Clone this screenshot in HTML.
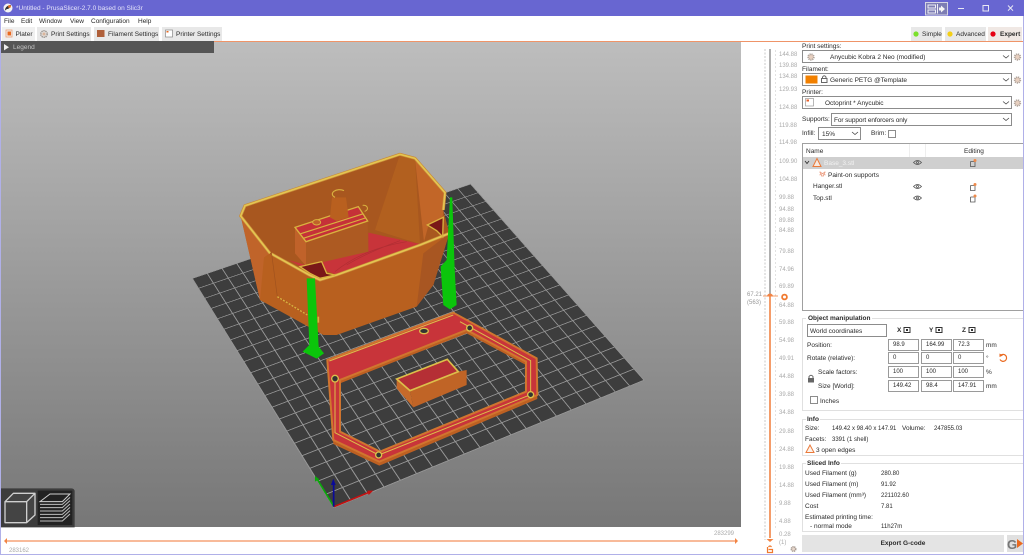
<!DOCTYPE html>
<html><head><meta charset="utf-8"><title>PrusaSlicer</title>
<style>
html,body{margin:0;padding:0;width:1024px;height:555px;overflow:hidden;background:#fff}
body{position:relative;font-family:"Liberation Sans",sans-serif;font-size:6.5px;color:#2a2a2a}
.a{position:absolute}
.t{position:absolute;white-space:nowrap;line-height:10px;height:10px;margin-top:1px}
.d{font-size:6px}
.n{position:absolute;white-space:nowrap;line-height:10px;height:10px;color:#aaa;left:779px;font-size:6px;margin-top:1px}
.box{position:absolute;background:#fff;border:1px solid #8c8c8c;box-sizing:border-box}
.inp{position:absolute;background:#fff;border:1px solid #9a9a9a;box-sizing:border-box;line-height:11px;padding-left:4px;white-space:nowrap;font-size:6px}
.tab{position:absolute;top:27px;height:14px;background:#e8e8e8}
.grp{position:absolute;left:802px;width:224px;border:1px solid #e0e0e0;box-sizing:border-box}
svg{position:absolute;overflow:visible}
</style></head><body>
<!-- title bar -->
<div class="a" style="left:0;top:0;width:1024px;height:16px;background:#6866d1"></div>
<svg style="left:0;top:0" width="20" height="16"><circle cx="8" cy="8" r="4.5" fill="#f4f4f4"/><path d="M5 10.5C5 7 8 5 11 5 10 8 9 9 7 9Z" fill="#333"/><circle cx="9.5" cy="6.5" r="1.4" fill="#ea7020"/></svg>
<div class="t" style="left:16px;top:3px;color:#e4e4fa">*Untitled - PrusaSlicer-2.7.0 based on Slic3r</div>
<svg style="left:925px;top:2px" width="99" height="14">
<rect x=".5" y=".5" width="22" height="12.5" fill="#7d7db4" stroke="#d4d4e4"/>
<rect x="3" y="3" width="7.5" height="3" fill="none" stroke="#f0f0f8" stroke-width="1"/><rect x="3" y="8" width="7.5" height="3" fill="none" stroke="#f0f0f8" stroke-width="1"/>
<path d="M12.5 2V11.5" stroke="#f0f0f8" stroke-width="1"/><path d="M14 5.5V8.5H16V10.5L20 7 16 3.5V5.5Z" fill="#f4f4f4"/>
<path d="M33 6.5H39" stroke="#e8e8f4" stroke-width="1"/>
<rect x="58" y="3.5" width="5.5" height="5.5" fill="none" stroke="#e8e8f4" stroke-width="1"/>
<path d="M83 3.5L88 8.7M88 3.5L83 8.7" stroke="#e8e8f4" stroke-width="1"/></svg>
<!-- menu -->
<div class="t" style="left:4px;top:16px">File</div>
<div class="t" style="left:21px;top:16px">Edit</div>
<div class="t" style="left:39px;top:16px">Window</div>
<div class="t" style="left:70px;top:16px">View</div>
<div class="t" style="left:91px;top:16px">Configuration</div>
<div class="t" style="left:138px;top:16px">Help</div>
<!-- tabs -->
<div class="tab" style="left:2px;width:33px;background:#f0f0f0"></div>
<div class="tab" style="left:37px;width:54px"></div>
<div class="tab" style="left:94px;width:65px"></div>
<div class="tab" style="left:162px;width:60px"></div>
<div class="tab" style="left:911px;width:31px"></div>
<div class="tab" style="left:945px;width:41px"></div>
<div class="tab" style="left:988px;width:34px;background:#f0e8e4"></div>
<svg style="left:0;top:27px" width="230" height="14">
<rect x="6" y="3" width="6" height="7" fill="none" stroke="#e9a07a" stroke-width=".8"/><rect x="7.5" y="4.5" width="3.5" height="4" fill="#ea6a20"/>
<circle cx="44" cy="7" r="3.2" fill="none" stroke="#a09a94" stroke-width="1.6" stroke-dasharray="1.4 .6"/><circle cx="44" cy="7" r="1.6" fill="#d9b59c"/>
<rect x="97" y="3" width="7.5" height="7" fill="#b0603a"/>
<rect x="165.5" y="3" width="7" height="7" fill="#fff" stroke="#888" stroke-width=".7"/><rect x="166.5" y="4" width="2" height="1.5" fill="#ea6a20"/>
</svg>
<div class="t" style="left:15.5px;top:29px">Plater</div>
<div class="t" style="left:51px;top:29px">Print Settings</div>
<div class="t" style="left:108px;top:29px">Filament Settings</div>
<div class="t" style="left:176px;top:29px">Printer Settings</div>
<svg style="left:910px;top:27px" width="90" height="14"><circle cx="6" cy="7" r="2.6" fill="#7be02b"/><circle cx="40" cy="7" r="2.6" fill="#f4cf16"/><circle cx="83" cy="7" r="2.6" fill="#e60012"/></svg>
<div class="t" style="left:922px;top:29px">Simple</div>
<div class="t" style="left:956px;top:29px">Advanced</div>
<div class="t" style="left:1000px;top:29px;font-weight:bold">Expert</div>
<div class="a" style="left:0;top:41px;width:1024px;height:1px;background:#ef9468"></div>

<!-- canvas -->
<div class="a" style="left:1px;top:42px;width:740px;height:485px;background:linear-gradient(#bdbdbd,#777);overflow:hidden">
 <div class="a" style="left:-1px;top:-42px;width:1000px;height:1000px;transform-origin:0 0;transform:matrix3d(.31346,-.08054,0,.0000748,.09357,.1559,0,-.0001441,0,0,1,0,191.7,278.3,0,1);background-color:#3d3d3d;background-image:linear-gradient(#959595 3.2px,transparent 3.2px),linear-gradient(90deg,#959595 3.2px,transparent 3.2px);background-size:50px 50px;border-right:3px solid #959595;border-bottom:3px solid #959595"></div>
</div>
<div class="a" style="left:0;top:41px;width:214px;height:12px;background:#555"></div>
<svg style="left:4px;top:44px" width="6" height="7"><path d="M0 0L5 3.2 0 6.4Z" fill="#eee"/></svg>
<div class="t" style="left:13px;top:42px;color:#c4c4c4">Legend</div>

<!-- 3D models -->
<svg style="left:0;top:0" width="1024" height="555">
<g transform="translate(220 140) scale(.3333)">
 <polygon points="62,228 120,480 310,585 350,585 590,500 640,435 688,280 600,315 350,405 300,420 268,405 150,340" fill="#b8601f"/>
 <polygon points="62,228 150,340 132,352 120,480" fill="#c0642a"/>
 <polygon points="688,280 640,435 590,500 610,340" fill="#a85622"/>
 <polygon points="62,228 75,197 540,43 585,55 675,158 670,210 688,280 600,315 350,405 300,420 268,405 150,340" fill="#a8571f"/>
 <polygon points="540,43 465,270 600,312 585,55" fill="#b2601f"/>
 <polygon points="585,55 675,158 668,232 625,258 612,305" fill="#c26628"/>
 <polygon points="445,278 600,312 350,405 300,385 240,378 205,360 258,375 445,335" fill="#c8343a"/>
 <path d="M345 395C400 350 470 320 560 305M380 375C430 345 490 320 540 302" fill="none" stroke="#b02e33" stroke-width="2"/>
 <polygon points="225,262 258,305 258,378 225,340" fill="#c0622a"/>
 <polygon points="258,305 443,243 445,335 258,378" fill="#ad5a22"/>
 <polygon points="225,262 415,200 443,243 258,305" fill="#c53138" stroke="#d9b23f" stroke-width="4"/>
 <path d="M240 282L428 222M250 295L436 234" stroke="#d9b23f" stroke-width="3.5"/>
 <ellipse cx="290" cy="247" rx="12" ry="8" fill="#c0622a" stroke="#d9b23f" stroke-width="3"/>
 <path d="M428 196A11 9 0 1 1 434 214" fill="none" stroke="#d9b23f" stroke-width="3"/>
 <polygon points="336,172 378,172 386,232 350,243 330,232" fill="#b9601f"/>
 <path d="M345 172A20 12 0 1 1 372 152" fill="none" stroke="#d9b23f" stroke-width="3.5"/>
 <polyline points="150,340 62,228 75,197 540,43 585,55 675,158 670,210" fill="none" stroke="#c98a38" stroke-width="9"/>
 <polyline points="150,340 62,228 75,197 540,43 585,55 675,158 670,210" fill="none" stroke="#e4c652" stroke-width="5"/>
 <polyline points="155,342 268,405 300,420 350,405 600,315 688,280" fill="none" stroke="#c98a38" stroke-width="9"/>
 <polyline points="155,342 268,405 300,420 350,405 600,315 688,280" fill="none" stroke="#e4c652" stroke-width="5"/>
 <polygon points="240,380 305,365 320,400 345,405 300,415 270,400" fill="#7a1818" stroke="#d9b23f" stroke-width="4"/>
 <polygon points="622,255 670,232 668,290 650,272" fill="#7a1818" stroke="#d9b23f" stroke-width="4"/>
 <path d="M155 342L172 470 262 525" fill="none" stroke="#a0521e" stroke-width="2"/>
 <path d="M172 470L262 525" stroke="#d9b23f" stroke-width="4" stroke-dasharray="6 4"/>
 <path d="M295 530V548" stroke="#d9b23f" stroke-width="5"/>
</g>
<g transform="translate(150 170) scale(.3333)" fill="#0bc50b">
 <path d="M470 325L495 325 506 530 522 550 500 566 458 545 478 525Z"/>
 <path d="M900 82L907 82 914 295 920 405 900 418 880 405 872 290 890 270Z"/>
</g>
<g transform="translate(290 300) scale(.3333)">
 <path fill-rule="evenodd" fill="#bd6022" d="M112 192L490 50 740 187 742 297 268 497 130 432ZM150 250L530 100 708 195 708 285 270 465 150 405Z"/>
 <path fill-rule="evenodd" fill="#c8343a" stroke="#d0752f" stroke-width="6" d="M112 180L490 38 740 175 742 285 268 485 130 420ZM150 240L530 90 708 185 708 275 270 455 150 395Z"/>
 <path d="M118 183L490 45M510 65L722 182 722 284 266 465 135 398 135 236" fill="none" stroke="#dcbf4a" stroke-width="3"/>
 <g fill="#333" stroke="#dcbf4a" stroke-width="4">
  <ellipse cx="402" cy="93" rx="13" ry="8"/><circle cx="539" cy="84" r="9"/><circle cx="135" cy="236" r="10"/><circle cx="722" cy="284" r="9"/><circle cx="266" cy="465" r="9"/>
 </g>
 <polygon points="320,237 360,272 370,322 320,265" fill="#c66a2a"/>
 <polygon points="360,272 505,215 530,210 530,255 370,322" fill="#c06426"/>
 <polygon points="320,237 472,178 505,215 360,272" fill="#b52f35" stroke="#dcbf4a" stroke-width="5"/>
</g>
<!-- axes -->
<g transform="translate(150 170) scale(.3333)" fill="none" stroke-width="5">
 <path d="M552 1010L500 925" stroke="#0aa80a"/><path d="M552 1010L655 968" stroke="#c41010"/><path d="M551 1010V940" stroke="#0a0a9a"/>
 <path d="M550 926L543 945H557Z" fill="#0a0a9a" stroke="none"/><path d="M495 918L495 935 508 928Z" fill="#0aa80a" stroke="none"/><path d="M670 962L652 962 656 975Z" fill="#c41010" stroke="none"/>
</g>
<!-- view toolbar -->
<g transform="translate(0 470) scale(.3333)">
 <path d="M0 55H214Q224 55 224 65V172H0Z" fill="#3c3c3c"/>
 <rect x="113" y="62" width="104" height="103" fill="#222"/>
 <path d="M15 95H80V158H15ZM15 95L40 70H105V135L80 158M80 95L105 70" fill="#444" stroke="#cfcfcf" stroke-width="4" stroke-linejoin="round"/>
 <path d="M120 95L150 72H210L187 95Z" fill="none" stroke="#cfcfcf" stroke-width="3"/>
 <path d="M120 103H187L210 82M120 113H187L210 92M120 123H187L210 102M120 133H187L210 112M120 143H187L210 122M120 153H187L210 132" fill="none" stroke="#bdbdbd" stroke-width="3"/>
</g>

<!-- vertical slider -->
<path d="M765 49V540" stroke="#c8c8c8" stroke-width="1" stroke-dasharray="2 1.5" fill="none"/>
<path d="M770 49V296" stroke="#9a9a9a" stroke-width="1.6"/>
<path d="M770 296V538" stroke="#f28444" stroke-width="1.6"/>
<path d="M775.5 50V530" stroke="#d6d6d6" stroke-width=".7" stroke-dasharray="2 2" fill="none"/>
<path d="M763 296H778" stroke="#f28444" stroke-width=".8"/>
<path d="M767 296.5A3 3 0 0 1 773 296.5Z" fill="#f28444"/>
<circle cx="784.5" cy="297" r="2.4" fill="#fff" stroke="#f07a30" stroke-width="1.8"/>
<path d="M766.5 539H773.5L770 542Z" fill="#f28444"/>
<path d="M767.5 547V552.5H772.5V549.5H768.5M768.5 547Q770 545 771.5 547" fill="none" stroke="#f07a30" stroke-width="1.2"/>
<circle cx="793.5" cy="549" r="2.2" fill="#e8d8cc" stroke="#a89c94" stroke-width="1.6" stroke-dasharray="1.2 .6"/>
<!-- horizontal slider -->
<path d="M6 541H737" stroke="#f4905c" stroke-width="1.2"/>
<path d="M4 541L7 538V544Z" fill="#f28444"/><path d="M738 541L735 538V544Z" fill="#f28444"/>
</svg>
<div class="n" style="top:49px">144.88</div><div class="n" style="top:60px">139.88</div><div class="n" style="top:71px">134.88</div><div class="n" style="top:84px">129.93</div><div class="n" style="top:102px">124.88</div><div class="n" style="top:120px">119.88</div><div class="n" style="top:137px">114.98</div><div class="n" style="top:156px">109.90</div><div class="n" style="top:174px">104.88</div><div class="n" style="top:192px">99.88</div><div class="n" style="top:204px">94.88</div><div class="n" style="top:214.5px">89.88</div><div class="n" style="top:225px">84.88</div><div class="n" style="top:246px">79.88</div><div class="n" style="top:264px">74.96</div><div class="n" style="top:281px">69.89</div><div class="n" style="top:300px">64.88</div><div class="n" style="top:317px">59.88</div><div class="n" style="top:335px">54.98</div><div class="n" style="top:353px">49.91</div><div class="n" style="top:371px">44.88</div><div class="n" style="top:389px">39.88</div><div class="n" style="top:407px">34.88</div><div class="n" style="top:426px">29.88</div><div class="n" style="top:444px">24.88</div><div class="n" style="top:462px">19.88</div><div class="n" style="top:480px">14.88</div><div class="n" style="top:498px">9.88</div><div class="n" style="top:516px">4.88</div><div class="n" style="top:529px">0.28</div><div class="n" style="top:537px">(1)</div>
<div class="t d" style="left:747px;top:289px;color:#999">67.21</div><div class="t d" style="left:747px;top:297px;color:#999">(563)</div>
<div class="t d" style="left:9px;top:545px;color:#aaa">283162</div><div class="t d" style="left:714px;top:528px;color:#aaa">283299</div>

<!-- presets -->
<div class="t" style="left:802px;top:41px">Print settings:</div>
<div class="box" style="left:802px;top:50px;width:210px;height:13px"></div>
<div class="t" style="left:830px;top:52px">Anycubic Kobra 2 Neo (modified)</div>
<div class="t" style="left:802px;top:63.5px">Filament:</div>
<div class="box" style="left:802px;top:73px;width:210px;height:13px"></div>
<div class="t" style="left:830px;top:75px">Generic PETG @Template</div>
<div class="t" style="left:802px;top:86.5px">Printer:</div>
<div class="box" style="left:802px;top:96px;width:210px;height:13px"></div>
<div class="t" style="left:825px;top:98px">Octoprint * Anycubic</div>
<div class="t" style="left:802px;top:114px">Supports:</div>
<div class="box" style="left:831px;top:113px;width:181px;height:13px"></div>
<div class="t" style="left:834px;top:114.5px;letter-spacing:-.1px">For support enforcers only</div>
<div class="t" style="left:802px;top:128px">Infill:</div>
<div class="box" style="left:818px;top:127px;width:43px;height:13px"></div>
<div class="t" style="left:822px;top:128.5px">15%</div>
<div class="t" style="left:871px;top:128px">Brim:</div>
<div class="box" style="left:888px;top:129.5px;width:8px;height:8px"></div>
<svg style="left:0;top:0" width="1024" height="555">
<g fill="none" stroke="#444" stroke-width=".8">
 <path d="M1003 55.5L1006 58 1009 55.5M1003 78.5L1006 81 1009 78.5M1003 101.5L1006 104 1009 101.5M1003 118L1006 120.5 1009 118M852 132L855 134.5 858 132M880 329L883 331.5 886 329"/>
</g>
<g fill="#e8d0c0" stroke="#b0a49c" stroke-width="1.8" stroke-dasharray="1.2 .7">
 <circle cx="1017.5" cy="57" r="2.8"/><circle cx="1017.5" cy="80" r="2.8"/><circle cx="1017.5" cy="103" r="2.8"/><circle cx="811" cy="57" r="2.8"/>
</g>
<rect x="805.5" y="75.5" width="12" height="8" fill="#f28000"/>
<path d="M821.5 78.5V82.5H827V78.5ZM822.5 78.5V77Q824.2 74.5 826 77V78.5" fill="none" stroke="#666" stroke-width="1"/>
<rect x="805.5" y="98.5" width="8" height="7.5" fill="#fff" stroke="#888" stroke-width=".6"/><rect x="806.5" y="99.5" width="2.5" height="2" fill="#e8602a"/>
</svg>

<!-- tree -->
<div class="box" style="left:802px;top:143px;width:223px;height:168px;border-color:#a0a0a0"></div>
<div class="a" style="left:909px;top:144px;width:1px;height:13px;background:#eee"></div>
<div class="a" style="left:925px;top:144px;width:1px;height:13px;background:#eee"></div>
<div class="a" style="left:803px;top:157px;width:220px;height:11.5px;background:#cfcfcf"></div>
<div class="t" style="left:806px;top:145.5px">Name</div>
<div class="t" style="left:964px;top:145.5px">Editing</div>
<div class="t" style="left:824px;top:158px;color:#f2f2f2">Base_3.stl</div>
<div class="t" style="left:828px;top:169.5px">Paint-on supports</div>
<div class="t" style="left:813px;top:181px">Hanger.stl</div>
<div class="t" style="left:813px;top:193px">Top.stl</div>
<svg style="left:0;top:0" width="1024" height="555">
<path d="M805 161L807 163.5 809 161" fill="none" stroke="#333" stroke-width=".9"/>
<path d="M817 158.5L813 166.5H821Z" fill="#f8e8de" stroke="#ea7a3a" stroke-width="1"/>
<path d="M820 171.5L821.5 176H823.5L825 171.5M819.5 175L825.5 172M819.5 172L825.5 175" fill="none" stroke="#e89070" stroke-width=".7"/>
<g fill="none" stroke="#555" stroke-width=".8">
 <path d="M913.5 162.5Q917.5 158.5 921.5 162.5 917.5 166.5 913.5 162.5Z"/><circle cx="917.5" cy="162.5" r="1"/>
 <path d="M913.5 186.5Q917.5 182.5 921.5 186.5 917.5 190.5 913.5 186.5Z"/><circle cx="917.5" cy="186.5" r="1"/>
 <path d="M913.5 198Q917.5 194 921.5 198 917.5 202 913.5 198Z"/><circle cx="917.5" cy="198" r="1"/>
 <path d="M970.5 161.5V166.5H975V161.5H970.5"/><path d="M970.5 185.5V190.5H975V185.5H970.5"/><path d="M970.5 197V202H975V197H970.5"/>
</g>
<circle cx="975" cy="160.5" r="1.5" fill="#ef8a4a"/><circle cx="975" cy="184.5" r="1.5" fill="#ef8a4a"/><circle cx="975" cy="196" r="1.5" fill="#ef8a4a"/>
</svg>

<!-- object manipulation -->
<div class="grp" style="top:318px;height:93px"></div>
<div class="t" style="left:806px;top:313px;font-weight:bold;background:#fff;padding:0 2px">Object manipulation</div>
<div class="box" style="left:807px;top:324px;width:80px;height:13px"></div>
<div class="t" style="left:810px;top:325.5px">World coordinates</div>
<div class="t" style="left:897px;top:325px;font-weight:bold">X</div>
<div class="t" style="left:929px;top:325px;font-weight:bold">Y</div>
<div class="t" style="left:962px;top:325px;font-weight:bold">Z</div>
<svg style="left:0;top:0" width="1024" height="555"><g fill="none" stroke="#333" stroke-width="1"><rect x="904" y="327.5" width="6" height="5"/><rect x="936" y="327.5" width="6" height="5"/><rect x="969" y="327.5" width="6" height="5"/></g>
<g fill="#333"><rect x="906" y="329" width="2" height="2"/><rect x="938" y="329" width="2" height="2"/><rect x="971" y="329" width="2" height="2"/></g>
<path d="M1000.5 355.5A3.5 3.5 0 1 1 1000 359.5" fill="none" stroke="#ea6a20" stroke-width="1.2"/><path d="M999.5 353.5L1003 355.5 999.5 357Z" fill="#ea6a20"/>
<rect x="808" y="378" width="6" height="4.5" fill="#666"/><path d="M809 378V376.5Q811 374 813 376.5V378" fill="none" stroke="#666" stroke-width="1"/></svg>
<div class="t" style="left:807px;top:339.5px">Position:</div>
<div class="t" style="left:807px;top:353px">Rotate (relative):</div>
<div class="t" style="left:818px;top:367px">Scale factors:</div>
<div class="t" style="left:818px;top:381px">Size [World]:</div>
<div class="inp" style="left:888px;top:339px;width:31px;height:12px">98.9</div>
<div class="inp" style="left:921px;top:339px;width:31px;height:12px">164.99</div>
<div class="inp" style="left:953px;top:339px;width:31px;height:12px">72.3</div>
<div class="t" style="left:986px;top:339.5px">mm</div>
<div class="inp" style="left:888px;top:352px;width:31px;height:12px">0</div>
<div class="inp" style="left:921px;top:352px;width:31px;height:12px">0</div>
<div class="inp" style="left:953px;top:352px;width:31px;height:12px">0</div>
<div class="t" style="left:986px;top:353px">°</div>
<div class="inp" style="left:888px;top:366px;width:31px;height:12px">100</div>
<div class="inp" style="left:921px;top:366px;width:31px;height:12px">100</div>
<div class="inp" style="left:953px;top:366px;width:31px;height:12px">100</div>
<div class="t" style="left:986px;top:367px">%</div>
<div class="inp" style="left:888px;top:380px;width:31px;height:12px">149.42</div>
<div class="inp" style="left:921px;top:380px;width:31px;height:12px">98.4</div>
<div class="inp" style="left:953px;top:380px;width:31px;height:12px">147.91</div>
<div class="t" style="left:986px;top:381px">mm</div>
<div class="box" style="left:809.5px;top:396px;width:8px;height:8px"></div>
<div class="t" style="left:820px;top:395.5px">Inches</div>

<!-- info -->
<div class="grp" style="top:419px;height:37px"></div>
<div class="t" style="left:806px;top:413.5px;font-weight:bold;background:#fff;padding:0 1px">Info</div>
<div class="t" style="left:805px;top:422.5px">Size:</div>
<div class="t d" style="left:832px;top:422.5px">149.42 x 98.40 x 147.91</div>
<div class="t" style="left:902px;top:422.5px">Volume:</div>
<div class="t d" style="left:934px;top:422.5px">247855.03</div>
<div class="t" style="left:805px;top:433.5px">Facets:</div>
<div class="t d" style="left:832px;top:433.5px">3391 (1 shell)</div>
<svg style="left:0;top:0" width="1024" height="555"><path d="M810 445L806 452.5H814Z" fill="#fdf3ec" stroke="#ea7a3a" stroke-width="1"/></svg>
<div class="t" style="left:816px;top:444.5px">3 open edges</div>

<!-- sliced info -->
<div class="grp" style="top:463px;height:69px"></div>
<div class="t" style="left:806px;top:458px;font-weight:bold;background:#fff;padding:0 1px">Sliced Info</div>
<div class="t" style="left:805px;top:467.5px">Used Filament (g)</div><div class="t d" style="left:881px;top:467.5px">280.80</div>
<div class="t" style="left:805px;top:478.5px">Used Filament (m)</div><div class="t d" style="left:881px;top:478.5px">91.92</div>
<div class="t" style="left:805px;top:489.5px">Used Filament (mm³)</div><div class="t d" style="left:881px;top:489.5px">221102.60</div>
<div class="t" style="left:805px;top:500.5px">Cost</div><div class="t d" style="left:881px;top:500.5px">7.81</div>
<div class="t" style="left:805px;top:512px">Estimated printing time:</div>
<div class="t" style="left:810px;top:520.5px">- normal mode</div><div class="t d" style="left:881px;top:520.5px">11h27m</div>

<!-- export -->
<div class="a" style="left:802px;top:535px;width:202px;height:17px;background:#e4e4e4"></div>
<div class="t" style="left:802px;top:538px;width:202px;text-align:center;font-weight:bold">Export G-code</div>
<div class="a" style="left:1007px;top:535px;width:17px;height:17px;background:#e0e0e0"></div>
<div class="t" style="left:1007px;top:537px;font:bold 13px/13px 'Liberation Sans',sans-serif;height:13px;color:#777">G</div>
<svg style="left:1017px;top:538px" width="7" height="11"><path d="M0 1L6 5.5 0 10Z" fill="#ea6a20"/></svg>

<!-- window border -->
<div class="a" style="left:0;top:16px;width:1px;height:539px;background:#b0b0e8"></div>
<div class="a" style="left:1023px;top:16px;width:1px;height:539px;background:#b0b0e8"></div>
<div class="a" style="left:0;top:554px;width:1024px;height:1px;background:#b0b0e8"></div>
</body></html>
